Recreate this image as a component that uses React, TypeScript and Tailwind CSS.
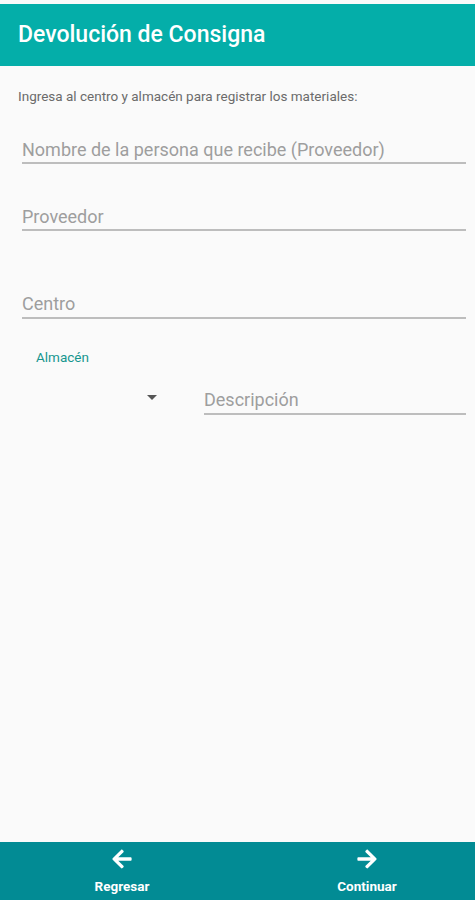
import React from "react";
import { FaArrowLeft, FaArrowRight } from "react-icons/fa";

function Field({ label, className = "" }: { label: string; className?: string }) {
  return (
    <div className={`border-b-2 border-[#bdbdbd] pb-[1px] ${className}`}>
      <div className="text-[18px] leading-[22px] text-[#9e9e9e]">{label}</div>
    </div>
  );
}

export default function App() {
  return (
    <div
      className="flex min-h-[900px] flex-col bg-[#fafafa]"
      style={{ fontFamily: "Roboto, 'Noto Sans', sans-serif" }}
    >
      <div className="mt-[4px] flex h-[62px] items-center bg-[#04aea9] px-[18px]">
        <h1 className="text-[23px] font-medium text-white">Devolución de Consigna</h1>
      </div>
      <div className="flex flex-1 flex-col">
        <p className="mx-[18px] mt-[22px] text-[13.5px] leading-[16px] text-[#6b6b6b]">
          Ingresa al centro y almacén para registrar los materiales:
        </p>
        <Field label="Nombre de la persona que recibe (Proveedor)" className="ml-[22px] mr-[9px] mt-[35px]" />
        <Field label="Proveedor" className="ml-[22px] mr-[9px] mt-[42px]" />
        <Field label="Centro" className="ml-[22px] mr-[9px] mt-[62px] pb-[2px]" />
        <div className="ml-[36px] mt-[30px] text-[13.5px] leading-[16px] text-[#16968f]">Almacén</div>
        <div className="mr-[9px] mt-[24px] flex items-end">
          <div className="flex w-[204px] items-center self-start pt-[6px]">
            <div className="ml-[147px] h-0 w-0 border-x-[5px] border-t-[5px] border-x-transparent border-t-[#555555]" />
          </div>
          <Field label="Descripción" className="flex-1 pb-[2px]" />
        </div>
        <div className="flex-1" />
      </div>
      <div className="flex h-[58px] bg-[#028b94] text-white">
        <div className="flex w-[244px] flex-col items-center pt-[6px]">
          <FaArrowLeft className="h-[22px] w-[22px]" />
          <span className="mt-[8px] text-[13.5px] font-bold leading-[16px]">Regresar</span>
        </div>
        <div className="flex flex-1 flex-col items-center pl-[15px] pt-[6px]">
          <FaArrowRight className="h-[22px] w-[22px]" />
          <span className="mt-[8px] text-[13.5px] font-bold leading-[16px]">Continuar</span>
        </div>
      </div>
    </div>
  );
}
